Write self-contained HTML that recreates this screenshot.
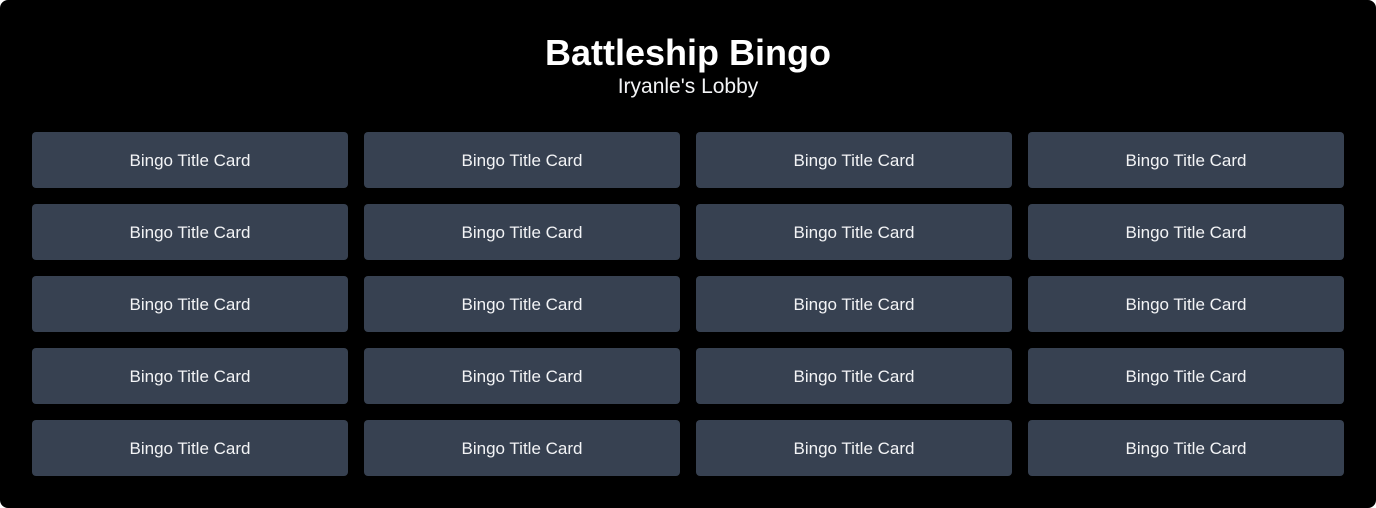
<!DOCTYPE html>
<html><head><style>
html,body{margin:0;background:#fff;}
.w{width:1376px;height:508px;background:#000;border-radius:8px;position:relative;overflow:hidden;font-family:"Liberation Sans",sans-serif;color:#fff;}
h1{position:absolute;top:31px;left:0;width:100%;margin:0;text-align:center;font-size:36px;font-weight:bold;line-height:44px;}
.s{position:absolute;top:74px;left:0;width:100%;text-align:center;font-size:21px;line-height:26px;color:#f3f4f6;}
.g{position:absolute;left:32px;top:132px;display:grid;grid-template-columns:repeat(4,316px);grid-auto-rows:56px;gap:16px;}
.c{background:#374151;border-radius:4px;display:flex;align-items:center;justify-content:center;font-size:17px;color:#f3f4f6;padding-top:1px;box-sizing:border-box;}
</style></head><body><div class="w">
<h1>Battleship Bingo</h1>
<div class="s">Iryanle's Lobby</div>
<div class="g">
<div class="c">Bingo Title Card</div><div class="c">Bingo Title Card</div><div class="c">Bingo Title Card</div><div class="c">Bingo Title Card</div>
<div class="c">Bingo Title Card</div><div class="c">Bingo Title Card</div><div class="c">Bingo Title Card</div><div class="c">Bingo Title Card</div>
<div class="c">Bingo Title Card</div><div class="c">Bingo Title Card</div><div class="c">Bingo Title Card</div><div class="c">Bingo Title Card</div>
<div class="c">Bingo Title Card</div><div class="c">Bingo Title Card</div><div class="c">Bingo Title Card</div><div class="c">Bingo Title Card</div>
<div class="c">Bingo Title Card</div><div class="c">Bingo Title Card</div><div class="c">Bingo Title Card</div><div class="c">Bingo Title Card</div>
</div></div></body></html>
